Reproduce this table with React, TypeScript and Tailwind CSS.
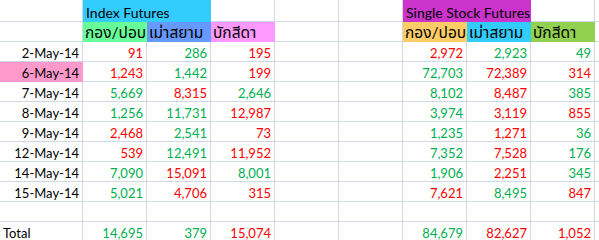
import type { ReactNode } from "react";

type Tone = "r" | "g";
type Row = { date: string; pink?: boolean; cells: [string, Tone][] };

const toneClass: Record<Tone, string> = {
  r: "text-[#ff0000]",
  g: "text-[#00b050]",
};

const rows: Row[] = [
  { date: "2-May-14", cells: [["91", "r"], ["286", "g"], ["195", "r"], ["2,972", "r"], ["2,923", "g"], ["49", "g"]] },
  { date: "6-May-14", pink: true, cells: [["1,243", "r"], ["1,442", "g"], ["199", "r"], ["72,703", "g"], ["72,389", "r"], ["314", "r"]] },
  { date: "7-May-14", cells: [["5,669", "g"], ["8,315", "r"], ["2,646", "g"], ["8,102", "g"], ["8,487", "r"], ["385", "g"]] },
  { date: "8-May-14", cells: [["1,256", "g"], ["11,731", "g"], ["12,987", "r"], ["3,974", "g"], ["3,119", "r"], ["855", "r"]] },
  { date: "9-May-14", cells: [["2,468", "r"], ["2,541", "g"], ["73", "r"], ["1,235", "g"], ["1,271", "r"], ["36", "g"]] },
  { date: "12-May-14", cells: [["539", "r"], ["12,491", "g"], ["11,952", "r"], ["7,352", "g"], ["7,528", "r"], ["176", "g"]] },
  { date: "14-May-14", cells: [["7,090", "g"], ["15,091", "r"], ["8,001", "g"], ["1,906", "g"], ["2,251", "r"], ["345", "g"]] },
  { date: "15-May-14", cells: [["5,021", "g"], ["4,706", "r"], ["315", "r"], ["7,621", "r"], ["8,495", "g"], ["847", "r"]] },
];

const total: [string, Tone][] = [
  ["14,695", "g"], ["379", "g"], ["15,074", "r"], ["84,679", "g"], ["82,627", "r"], ["1,052", "r"],
];

/** One spreadsheet cell; filled cells hide their own gridlines */
function Cell({
  children,
  fill = "bg-white border-[#d0d7e5]",
  tone = "",
  right = false,
  tall = false,
  span = "",
  size = "",
}: {
  children?: ReactNode;
  fill?: string;
  tone?: string;
  right?: boolean;
  tall?: boolean;
  span?: string;
  size?: string;
}) {
  return (
    <div
      className={`${tall ? "h-[22px]" : "h-[20px]"} border-r border-b ${fill} ${span} ${size} flex items-end overflow-hidden whitespace-nowrap px-[3px] pb-[1px] leading-none ${
        right ? "justify-end" : "justify-start"
      } ${tone}`}
    >
      {children}
    </div>
  );
}

function Blank({ tall = false }: { tall?: boolean }) {
  return <Cell tall={tall} />;
}

function Edge({ tall = false }: { tall?: boolean }) {
  return <div className={`${tall ? "h-[22px]" : "h-[20px]"} border-b border-[#d0d7e5] bg-white`} />;
}

const thai = "text-[15.5px] pl-[2px]";

export default function App() {
  return (
    <div
      className="w-[599px] h-[240px] overflow-hidden bg-white text-[13px] text-black"
      style={{ fontFamily: "Lato, 'Noto Sans Thai', Tahoma, 'DejaVu Sans', sans-serif" }}
    >
      <div className="grid grid-cols-[83px_repeat(8,64px)_1fr]">
        {/* Row 1: group titles */}
        <Blank tall />
        <Cell tall span="col-span-2" size="text-[14px]" fill="bg-[#33ccff] border-[#33ccff]">Index Futures</Cell>
        <Blank tall />
        <Blank tall />
        <Blank tall />
        <Cell tall span="col-span-2" size="text-[14px]" fill="bg-[#cc33cc] border-[#cc33cc]">Single Stock Futures</Cell>
        <Blank tall />
        <Edge tall />

        {/* Row 2: column labels */}
        <Blank />
        <Cell size={thai} fill="bg-[#66ff99] border-[#66ff99]">กอง/ปอบ</Cell>
        <Cell size={thai} fill="bg-[#6699ff] border-[#6699ff]">เม่าสยาม</Cell>
        <Cell size={thai} fill="bg-[#ff99ff] border-[#ff99ff]">บักสีดา</Cell>
        <Blank />
        <Blank />
        <Cell size={thai} fill="bg-[#ffcc66] border-[#ffcc66]">กอง/ปอบ</Cell>
        <Cell size={thai} fill="bg-[#33ccff] border-[#33ccff]">เม่าสยาม</Cell>
        <Cell size={thai} fill="bg-[#92d050] border-[#92d050]">บักสีดา</Cell>
        <Edge />

        {/* Daily rows */}
        {rows.map((row) => (
          <Row key={row.date} row={row} />
        ))}

        {/* Empty spacer row */}
        {Array.from({ length: 9 }).map((_, i) => (
          <Blank key={`e${i}`} />
        ))}
        <Edge />

        {/* Total */}
        <Cell>Total</Cell>
        {total.slice(0, 3).map(([v, t], i) => (
          <Cell key={`ti${i}`} right tone={toneClass[t]}>{v}</Cell>
        ))}
        <Blank />
        <Blank />
        {total.slice(3).map(([v, t], i) => (
          <Cell key={`ts${i}`} right tone={toneClass[t]}>{v}</Cell>
        ))}
        <Edge />
      </div>
    </div>
  );
}

function Row({ row }: { row: Row }) {
  const idx = row.cells.slice(0, 3);
  const ssf = row.cells.slice(3);
  return (
    <>
      <Cell right fill={row.pink ? "bg-[#ff99cc] border-[#ff99cc]" : undefined}>
        {row.date}
      </Cell>
      {idx.map(([v, t], i) => (
        <Cell key={`i${i}`} right tone={toneClass[t]}>{v}</Cell>
      ))}
      <Blank />
      <Blank />
      {ssf.map(([v, t], i) => (
        <Cell key={`s${i}`} right tone={toneClass[t]}>{v}</Cell>
      ))}
      <Edge />
    </>
  );
}
